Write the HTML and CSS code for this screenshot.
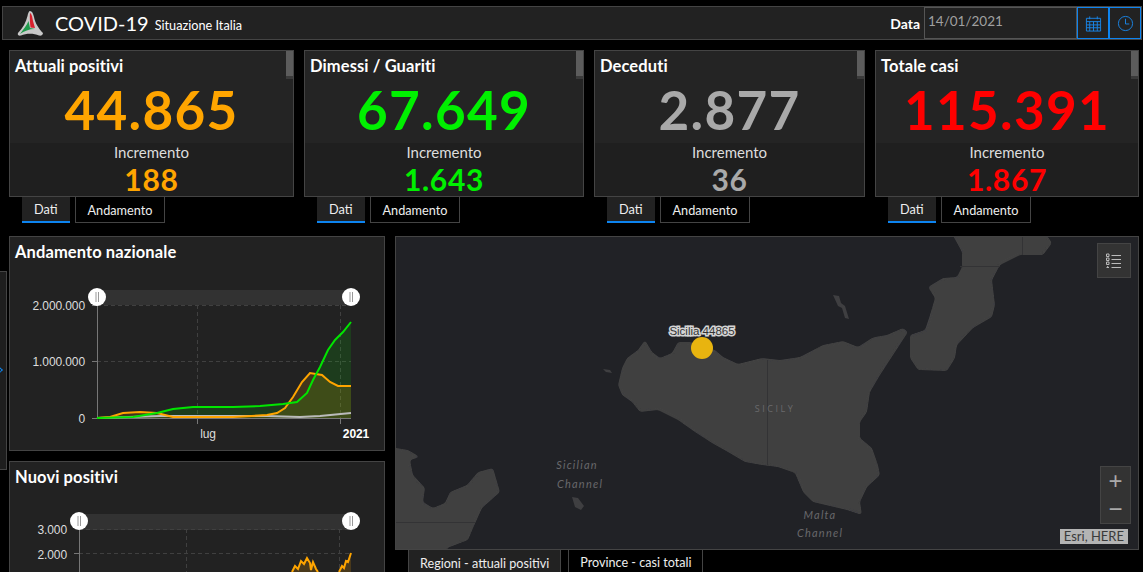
FILE: index.html
```html
<!DOCTYPE html>
<html lang="en">
<head>
    <meta charset="UTF-8">
    <title>COVID-19 Situazione Italia</title>
    <link rel="stylesheet" href="styles.css">
</head>
<body>
    <header class="topbar">
        <svg class="logo" viewBox="0 0 26 25">
            <path d="M13 0C15 0 16 2 17 6 18 12 22 18 26 22 26 24 24 25 22 24.500 17 22 9 22 4 24.500 2 25 0 24 1 22 6 17 9 11 10.500 5 11 2 12 0 13 0Z" fill="#c9c9c9"/>
            <path d="M13 2C15 3 15.500 7 16 10L18 17 13.500 16.500C13 12 12.500 6 13 2Z" fill="#d8202c"/>
            <path d="M11.500 10 13 17 18 18C12 18 7 20 3 23 6 19 10 14 11.500 10Z" fill="#1f9a4b"/>
        </svg>
        <span class="app-title">COVID-19</span>
        <span class="app-subtitle">Situazione Italia</span>
        <span class="date-label">Data</span>
        <div class="date-input">14/01/2021</div>
        <button class="date-btn">
            <svg viewBox="0 0 18 17" width="17" height="17" fill="none" stroke="#1a86e8">
                <path d="M1.500 3h15v13.500h-15z M1.500 6.500h15 M1.500 10h15 M1.500 13h15 M5 6.500v10 M9 6.500v10 M13 6.500v10 M5 1v3 M13 1v3"/>
            </svg>
        </button>
        <button class="date-btn">
            <svg viewBox="0 0 18 18" width="17" height="17" fill="none" stroke="#1a86e8">
                <circle cx="9" cy="9" r="7.500"/>
                <path d="M9 4v5.500h4"/>
            </svg>
        </button>
    </header>

    <section class="cards">
        <div class="card-wrap w1">
            <div class="card">
                <div class="card-head orange">
                    <h3>Attuali positivi</h3>
                    <div class="big">44.865</div>
                </div>
                <div class="card-foot orange">
                    <div class="inc-label">Incremento</div>
                    <div class="inc">188</div>
                </div>
                <div class="scroll-thumb"></div>
            </div>
            <div class="tabs"><span class="tab active">Dati</span><span class="tab">Andamento</span></div>
        </div>
        <div class="card-wrap w2">
            <div class="card">
                <div class="card-head green">
                    <h3>Dimessi / Guariti</h3>
                    <div class="big">67.649</div>
                </div>
                <div class="card-foot green">
                    <div class="inc-label">Incremento</div>
                    <div class="inc">1.643</div>
                </div>
                <div class="scroll-thumb"></div>
            </div>
            <div class="tabs"><span class="tab active">Dati</span><span class="tab">Andamento</span></div>
        </div>
        <div class="card-wrap w3">
            <div class="card">
                <div class="card-head grey">
                    <h3>Deceduti</h3>
                    <div class="big">2.877</div>
                </div>
                <div class="card-foot grey">
                    <div class="inc-label">Incremento</div>
                    <div class="inc">36</div>
                </div>
                <div class="scroll-thumb"></div>
            </div>
            <div class="tabs"><span class="tab active">Dati</span><span class="tab">Andamento</span></div>
        </div>
        <div class="card-wrap w4">
            <div class="card">
                <div class="card-head red">
                    <h3>Totale casi</h3>
                    <div class="big">115.391</div>
                </div>
                <div class="card-foot red">
                    <div class="inc-label">Incremento</div>
                    <div class="inc">1.867</div>
                </div>
                <div class="scroll-thumb"></div>
            </div>
            <div class="tabs"><span class="tab active">Dati</span><span class="tab">Andamento</span></div>
        </div>
    </section>

    <main class="lower">
        <div class="charts">
            <div class="panel chart-one">
                <h3>Andamento nazionale</h3>
                <svg class="chart" viewBox="10 270 374 180" width="374" height="180">
                    <rect class="bar" x="97" y="290" width="254" height="15"/>
                    <path class="grid" d="M97 305.500H351 M97 361.500H351 M197.500 305V418 M340.500 305V418"/>
                    <path class="axis" d="M97.500 305V419 M92 361.500h5 M92 305.500h5 M92 418.500h5 M197.500 419v5 M340.500 419v5"/>
                    <path class="axis" d="M97 418.500H351"/>
                    <path d="M97 418 133 417 157 413 173 409 193 407 233 407 260 406 283 404 297 402 307 393 313 380 320 367 328 350 335 340 343 332 351 322V418Z" fill="#00ff00" fill-opacity=".12"/>
                    <path d="M97 418 110 417 123 413 140 412 157 413 173 417 233 417 267 415 277 413 285 408 293 397 302 382 310 373 322 375 330 382 338 386 351 386V418Z" fill="#ffa500" fill-opacity=".15"/>
                    <path d="M97 418 160 416 267 416 300 417 320 416 351 413" fill="none" stroke="#bbb" stroke-width="2"/>
                    <path d="M97 418 110 417 123 413 140 412 157 413 173 417 233 417 267 415 277 413 285 408 293 397 302 382 310 373 322 375 330 382 338 386 351 386" fill="none" stroke="#ffa500" stroke-width="2"/>
                    <path d="M97 418 133 417 157 413 173 409 193 407 233 407 260 406 283 404 297 402 307 393 313 380 320 367 328 350 335 340 343 332 351 322" fill="none" stroke="#00e600" stroke-width="2"/>
                    <text class="tick end" x="85" y="310">2.000.000</text>
                    <text class="tick end" x="85" y="366">1.000.000</text>
                    <text class="tick end" x="85" y="423">0</text>
                    <text class="tick mid" x="208" y="438">lug</text>
                    <text class="tick mid strong" x="356" y="438">2021</text>
                    <circle class="knob" cx="97" cy="297" r="9"/>
                    <path class="knob-mark" d="M96 292v10 M98.500 292v10"/>
                    <circle class="knob" cx="351" cy="297" r="9"/>
                    <path class="knob-mark" d="M350 292v10 M352.500 292v10"/>
                </svg>
            </div>
            <div class="panel chart-two">
                <h3>Nuovi positivi</h3>
                <svg class="chart" viewBox="10 495 374 77" width="374" height="77">
                    <rect class="bar" x="79" y="514" width="272" height="16"/>
                    <path class="grid" d="M79 529.500H351 M79 553.500H351 M186.500 529V572 M339.500 529V572"/>
                    <path class="axis" d="M79.500 529V572 M74 553.500h5"/>
                    <path d="M292 572 295 566 298 569 301 561 304 564 307 558 310 563 313 562 316 569 318 572Z M339 572 342 566 344 568 346 561 348 562 351 553V572Z" fill="#ffa500" fill-opacity=".18"/>
                    <path d="M292 572 295 566 298 569 301 561 304 564 307 558 310 563 311 570 313 562 316 569 318 572 M339 572 342 566 344 568 346 561 348 562 351 553" fill="none" stroke="#ffa500" stroke-width="2"/>
                    <text class="tick end" x="67" y="534">3.000</text>
                    <text class="tick end" x="67" y="559">2.000</text>
                    <circle class="knob" cx="79" cy="521" r="9"/>
                    <path class="knob-mark" d="M78 516v10 M80.500 516v10"/>
                    <circle class="knob" cx="351" cy="521" r="9"/>
                    <path class="knob-mark" d="M350 516v10 M352.500 516v10"/>
                </svg>
            </div>
        </div>

        <div class="map-col">
            <div class="map">
                <svg class="basemap" viewBox="396 237 742 312" width="742" height="312">
                    <defs>
                        <!-- rounds the corners of the coast polygons -->
                        <filter id="coast" x="-5%" y="-5%" width="110%" height="110%">
                            <feGaussianBlur stdDeviation="1.800"/>
                            <feComponentTransfer>
                                <feFuncA type="linear" slope="5" intercept="-2"/>
                            </feComponentTransfer>
                        </filter>
                    </defs>
                    <g filter="url(#coast)">
                        <path class="land" d="M645 340 652 352 660 358 672 353 678 342 690 342 715 350 723 357 738 364 762 358 780 360 800 357 823 345 843 341 858 347 872 338 875 337 887 335 903 328 908 332 893 355 880 375 870 392 867 412 860 422 860 438 872 448 878 465 880 475 867 487 860 502 862 515 847 510 813 502 803 492 795 473 778 467 762 465 745 462 728 452 712 443 695 432 678 420 658 410 640 412 632 402 622 395 618 385 622 368 627 358 638 350Z"/>
                        <path class="land" d="M950 230 962 252 962 267 957 277 943 278 928 287 935 298 930 315 925 330 910 335 910 358 918 370 947 371 955 358 957 345 973 328 992 317 995 305 992 280 1000 265 1020 255 1043 255 1052 243 1043 230Z"/>
                        <path class="land" d="M390 447 408 450 420 457 410 460 413 475 425 488 423 502 433 508 445 503 450 492 467 485 478 472 493 468 500 492 482 508 473 528 468 540 447 548 447 556 390 556Z"/>
                    </g>
                    <path class="land" d="M603 369 610 370 612 373 606 372Z M833 295 839 296 841 303 845 306 849 319 845 318 842 308 838 306Z M572 497 578 498 584 506 581 510 575 507Z"/>
                    <path class="border" d="M767.500 360V465 M960 266.500H1000 M1022.500 237V255 M395 522.500H475"/>
                    <text class="place" x="775" y="412" text-anchor="middle">SICILY</text>
                    <text class="sea" x="577" y="469" text-anchor="middle">Sicilian</text>
                    <text class="sea" x="580" y="488" text-anchor="middle">Channel</text>
                    <text class="sea" x="820" y="519" text-anchor="middle">Malta</text>
                    <text class="sea" x="820" y="537" text-anchor="middle">Channel</text>
                    <circle cx="702" cy="348" r="11" fill="#e8b40f"/>
                    <text class="pin-label" x="702" y="335" text-anchor="middle">Sicilia 44865</text>
                </svg>
                <button class="map-btn layers">
                    <svg viewBox="0 0 16 16" width="16" height="16" fill="none" stroke="#bbb">
                        <path d="M5.500 2.500H15 M5.500 6.500H15 M5.500 10.500H15 M5.500 14.500H15"/>
                        <path d="M.5 1h2.500v2.500H.5z M.5 5h2.500v2.500H.5z M.5 9h2.500v2.500H.5z M.5 14.500H3 M1.700 13v2"/>
                    </svg>
                </button>
                <div class="zoom-ctl">
                    <button class="zoom-btn">+</button>
                    <button class="zoom-btn">&minus;</button>
                </div>
                <div class="attribution">Esri, HERE</div>
            </div>
            <div class="tabs map-tabs"><span class="tab active">Regioni - attuali positivi</span><span class="tab">Province - casi totali</span></div>
        </div>
    </main>

    <div class="side-handle"><span class="side-arrow"></span></div>
</body>
</html>
```

FILE: styles.css
```css
* {
    box-sizing: border-box;
}

html, body {
    height: 572px;
    overflow: hidden;
}

body {
    margin: 0;
    padding: 6px 4px 0 9px;
    background-color: #000;
    color: #fff;
    font-family: 'Lato', 'Open Sans', sans-serif;
    position: relative;
}

h3 {
    margin: 0;
    font-size: 16.500px;
    font-weight: 700;
    letter-spacing: .1px;
    line-height: 18px;
    color: #fff;
}

/* header */
.topbar {
    display: flex;
    align-items: center;
    height: 34px;
    margin-left: -7px;
    margin-right: -3px;
    padding-left: 14px;
    background-color: #222;
    border: 1px solid #444;
}

.logo {
    width: 26px;
    height: 25px;
    margin-right: 12px;
}

.app-title {
    font-size: 20px;
    margin-right: 6px;
}

.app-subtitle {
    font-size: 12.700px;
    margin-top: 3px;
}

.date-label {
    margin-left: auto;
    margin-right: 4px;
    font-size: 14px;
    font-weight: 700;
}

.date-input {
    width: 153px;
    height: 32px;
    padding: 5px 3px;
    border: 1px solid #555;
    color: #a0a0a0;
    font-size: 13.500px;
}

.date-btn {
    display: flex;
    align-items: center;
    justify-content: center;
    width: 32px;
    height: 32px;
    padding: 0;
    background: #222;
    border: 1px solid #0d84f0;
}

/* stat cards */
.cards {
    display: flex;
    gap: 10px;
    margin-top: 10px;
}

.w1 { width: 285px; }
.w2 { width: 280px; }
.w3 { width: 271px; }
.w4 { width: 264px; }

.card {
    position: relative;
    height: 147px;
    border: 1px solid #444;
    background-color: #1f1f1f;
    overflow: hidden;
}

.card-head {
    height: 92px;
    padding: 6px 5px 0;
    background-color: #242424;
}

.big {
    font-size: 53px;
    font-weight: 700;
    letter-spacing: 1.300px;
    line-height: 56px;
    text-align: center;
    margin-top: 7px;
}

.card-foot {
    text-align: center;
}

.inc-label {
    color: #ddd;
    font-size: 15px;
    line-height: 18px;
}

.inc {
    font-size: 30px;
    font-weight: 700;
    letter-spacing: .7px;
    line-height: 34px;
    margin-top: 1px;
}

.orange .big, .orange .inc { color: #ffa500; }
.green .big, .green .inc { color: #00f000; }
.grey .big, .grey .inc { color: #a9a9a9; }
.red .big, .red .inc { color: #ff0000; }

.scroll-thumb {
    position: absolute;
    top: 0;
    right: 0;
    width: 7px;
    height: 28px;
    background-color: #5c5c5c;
    border-bottom: 3px solid #3a3a3a;
}

/* tabs under cards and map */
.tabs {
    display: flex;
    gap: 5px;
    padding-left: 13px;
    height: 27px;
}

.tab {
    display: flex;
    align-items: center;
    padding: 0 12px;
    height: 26px;
    font-size: 12.700px;
    color: #eee;
    border: 1px solid #444;
    border-top: 0;
    background-color: #000;
}

.tab.active {
    background-color: #222;
    border: 0;
    border-bottom: 2px solid #0d84f0;
}

/* lower area */
.lower {
    display: flex;
    gap: 10px;
    margin-top: 12px;
}

.charts {
    display: flex;
    flex-direction: column;
    gap: 10px;
    width: 376px;
    flex: none;
}

.panel {
    background-color: #222;
    border: 1px solid #444;
    overflow: hidden;
}

.panel h3 {
    padding: 6px 5px 0;
    height: 33px;
}

.chart-one {
    height: 215px;
}

.chart-two {
    height: 120px;
}

.chart {
    display: block;
}

.bar {
    fill: #323232;
}

.grid {
    fill: none;
    stroke: #404040;
    stroke-dasharray: 4 3;
}

.axis {
    fill: none;
    stroke: #777;
}

.tick {
    font-family: 'Liberation Sans', sans-serif;
    font-size: 12px;
    letter-spacing: -.1px;
    fill: #ddd;
}

.tick.end { text-anchor: end; }
.tick.mid { text-anchor: middle; }
.tick.strong { font-weight: 700; fill: #fff; font-size: 12px; }

.knob {
    fill: #fff;
}

.knob-mark {
    fill: none;
    stroke: #999;
}

/* map */
.map-col {
    width: 744px;
    flex: none;
}

.map {
    position: relative;
    height: 314px;
    background-color: #212226;
    border: 1px solid #444;
}

.basemap {
    display: block;
}

.land {
    fill: #3f3f41;
}

.border {
    fill: none;
    stroke: #333335;
}

.place {
    font-family: 'Open Sans', sans-serif;
    font-size: 9px;
    letter-spacing: 2.500px;
    fill: #6a6a6c;
}

.sea {
    font-family: 'Lato', sans-serif;
    font-style: italic;
    font-size: 11px;
    letter-spacing: 1.200px;
    fill: #68686b;
}

.pin-label {
    font-family: 'Liberation Sans', sans-serif;
    font-size: 11.500px;
    fill: #333;
    stroke: #d4d4d4;
    stroke-width: 3px;
    paint-order: stroke;
}

.map-btn {
    position: absolute;
    top: 6px;
    right: 7px;
    width: 34px;
    height: 35px;
    display: flex;
    align-items: center;
    justify-content: center;
    padding: 0;
    background-color: #333;
    border: 1px solid #444;
}

.zoom-ctl {
    position: absolute;
    right: 7px;
    top: 229px;
    width: 31px;
    height: 58px;
    display: flex;
    flex-direction: column;
    background-color: #333;
    border: 1px solid #444;
}

.zoom-btn {
    flex: 1;
    padding: 0;
    border: 0;
    background: none;
    color: #aaa;
    font-family: 'Liberation Sans', sans-serif;
    font-size: 24px;
    line-height: 1;
}

.attribution {
    position: absolute;
    right: 10px;
    bottom: 5px;
    height: 15px;
    padding: 0 4px;
    background-color: #b4b4b4;
    color: #3a3a3a;
    font-size: 13px;
    line-height: 15px;
}

.map-tabs {
    padding-left: 13px;
    gap: 7px;
}

.map-tabs .tab.active {
    border-bottom: 0;
}

.map-tabs .tab {
    border-left: 1px solid #444;
    border-right: 1px solid #444;
    font-size: 12.600px;
    padding: 0 11px;
}

/* collapsed side panel on the left edge */
.side-handle {
    position: absolute;
    left: 0;
    top: 271px;
    width: 7px;
    height: 199px;
    background-color: #1e1e1e;
    border: 1px solid #444;
    border-left: 0;
}

.side-arrow {
    position: absolute;
    left: -2px;
    top: 96px;
    width: 4px;
    height: 4px;
    border-top: 1px solid #0d84f0;
    border-right: 1px solid #0d84f0;
    transform: rotate(45deg);
}
```
